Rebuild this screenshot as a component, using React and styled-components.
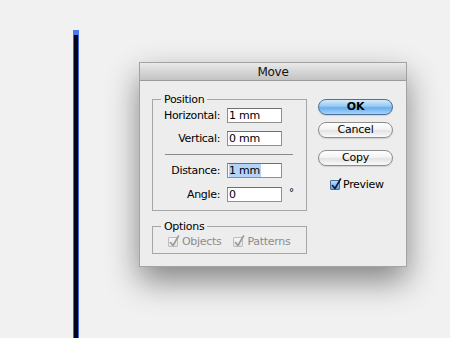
import React from 'react';
import styled, { createGlobalStyle } from 'styled-components';

const Global = createGlobalStyle`
    html, body {
        margin: 0;
        padding: 0;
        background: #f1f1f1;
    }
    body {
        font-family: 'DejaVu Sans', 'Liberation Sans', sans-serif;
        color: #000;
    }
`

const Canvas = styled.div`
    width: 450px;
    height: 338px;
    overflow: hidden;
    display: flex;
    align-items: flex-start;
`

const PathLine = styled.div`
    position: relative;
    align-self: stretch;
    margin-left: 73px;
    margin-top: 31px;
    width: 4px;
    background: #05051a;
    border-left: 1px solid #3d63e0;
    border-right: 1px solid #3d63e0;
    &::before {
        content: '';
        position: absolute;
        left: -1px;
        top: -1px;
        width: 6px;
        height: 5px;
        background: #4a78f0;
    }
`

const Dialog = styled.div`
    margin-left: 60px;
    margin-top: 62px;
    width: 268px;
    height: 205px;
    box-sizing: border-box;
    border: 1px solid #a3a3a3;
    background: #ededed;
    box-shadow: 0 14px 30px rgba(0, 0, 0, 0.45);
    display: flex;
    flex-direction: column;
`

const TitleBar = styled.div`
    height: 17px;
    border-bottom: 1px solid #9c9c9c;
    background: linear-gradient(#e9e9e9, #c3c3c3);
    display: flex;
    align-items: center;
    justify-content: center;
    font-size: 12px;
    letter-spacing: -0.3px;
    color: #111;
`

const Body = styled.div`
    display: flex;
    padding: 12px 0 0 12px;
`

const LeftCol = styled.div`
    width: 155px;
    display: flex;
    flex-direction: column;
`

const Group = styled.fieldset`
    margin: ${props => props.$top || 0}px 0 0 0;
    padding: 2px 8px ${props => props.$bottom || 8}px 11px;
    border: 1px solid #a6a6a6;
    min-width: 0;
`

const Legend = styled.legend`
    font-size: 11px;
    line-height: 13px;
    letter-spacing: -0.3px;
    padding: 0 3px;
    margin-left: -3px;
`

const FieldGrid = styled.div`
    display: grid;
    grid-template-columns: 56px 55px 6px;
    column-gap: 7px;
    row-gap: 8px;
    align-items: center;
`

const Label = styled.label`
    font-size: 11px;
    letter-spacing: -0.35px;
    text-align: right;
    white-space: nowrap;
    margin-top: ${props => props.$top || 0}px;
`

const Field = styled.div`
    height: 15px;
    box-sizing: border-box;
    border: 1px solid #8f8f8f;
    border-top-color: #6f6f6f;
    background: #fff;
    font-size: 11px;
    line-height: 13px;
    padding-left: 1px;
    letter-spacing: -0.2px;
    white-space: nowrap;
    margin-top: ${props => props.$top || 0}px;
`

const Selected = styled.span`
    background: #b3d3f8;
    padding-right: 1px;
`

const Unit = styled.span`
    font-size: 10px;
    align-self: start;
    margin-top: ${props => props.$top || 0}px;
`

const Separator = styled.div`
    grid-column: 1 / -1;
    height: 1px;
    margin: 0 2px 0 1px;
    background: #8a8a8a;
`

const CheckRow = styled.div`
    display: flex;
    align-items: center;
    gap: ${props => props.$gap || 0}px;
    padding-left: ${props => props.$indent || 0}px;
    margin-top: ${props => props.$top || 0}px;
`

const CheckItem = styled.div`
    display: flex;
    align-items: center;
    gap: ${props => props.$gap || 4}px;
    font-size: 11px;
    letter-spacing: -0.3px;
    color: ${props => props.$disabled ? '#8c8c8c' : '#000'};
`

const Box = styled.span`
    width: 10px;
    height: 10px;
    box-sizing: border-box;
    border: 1px solid ${props => props.$disabled ? '#bdbdbd' : '#4a6c97'};
    background: ${props => props.$disabled ? 'linear-gradient(#f7f7f7, #e2e2e2)' : 'linear-gradient(#bfe0fb, #5f9fe0)'};
    border-radius: 1px;
    position: relative;
    svg {
        position: absolute;
        left: 0;
        top: -3px;
    }
`

const RightCol = styled.div`
    width: 75px;
    margin-left: 11px;
    display: flex;
    flex-direction: column;
`

const Button = styled.button`
    height: 16px;
    width: 75px;
    padding: 0;
    margin-top: ${props => props.$top}px;
    border-radius: 8px;
    border: 1px solid ${props => props.$primary ? '#4b6e9c' : '#8d8d8d'};
    background: ${props => props.$primary
        ? 'linear-gradient(#d6ebfc 0%, #95c8f4 45%, #6aafec 55%, #a4d4fa 100%)'
        : 'linear-gradient(#ffffff 0%, #f3f3f3 45%, #e3e3e3 55%, #fafafa 100%)'};
    font-family: 'DejaVu Sans', sans-serif;
    font-size: 11px;
    line-height: 14px;
    letter-spacing: -0.2px;
    font-weight: ${props => props.$primary ? 700 : 400};
    color: #000;
    box-shadow: 0 1px 1px rgba(0, 0, 0, 0.12);
`

function Check({ disabled }) {
    return (
        <Box $disabled={disabled}>
            <svg width="11" height="12" viewBox="0 0 11 12">
                <path
                    d="M1.5 7.5 L4 10.5 L9.5 1"
                    fill="none"
                    stroke={disabled ? '#9a9a9a' : '#0c1c3a'}
                    strokeWidth="1.6"
                    strokeLinecap="round"
                    strokeLinejoin="round"
                />
            </svg>
        </Box>
    )
}

export default function App() {
    return (
        <Canvas>
            <Global />
            <PathLine />
            <Dialog>
                <TitleBar>Move</TitleBar>
                <Body>
                    <LeftCol>
                        <Group>
                            <Legend>Position</Legend>
                            <FieldGrid>
                                <Label>Horizontal:</Label>
                                <Field>1 mm</Field>
                                <span />
                                <Label>Vertical:</Label>
                                <Field>0 mm</Field>
                                <span />
                                <Separator />
                                <Label>Distance:</Label>
                                <Field><Selected>1 mm</Selected></Field>
                                <span />
                                <Label $top={1}>Angle:</Label>
                                <Field $top={1}>0</Field>
                                <Unit $top={1}>°</Unit>
                            </FieldGrid>
                        </Group>
                        <Group $top={9} $bottom={5}>
                            <Legend>Options</Legend>
                            <CheckRow $gap={12} $indent={4}>
                                <CheckItem $disabled><Check disabled />Objects</CheckItem>
                                <CheckItem $disabled><Check disabled />Patterns</CheckItem>
                            </CheckRow>
                        </Group>
                    </LeftCol>
                    <RightCol>
                        <Button $primary $top={6}>OK</Button>
                        <Button $top={7}>Cancel</Button>
                        <Button $top={12}>Copy</Button>
                        <CheckRow $indent={12} $top={12}>
                            <CheckItem $gap={3}><Check />Preview</CheckItem>
                        </CheckRow>
                    </RightCol>
                </Body>
            </Dialog>
        </Canvas>
    )
}
